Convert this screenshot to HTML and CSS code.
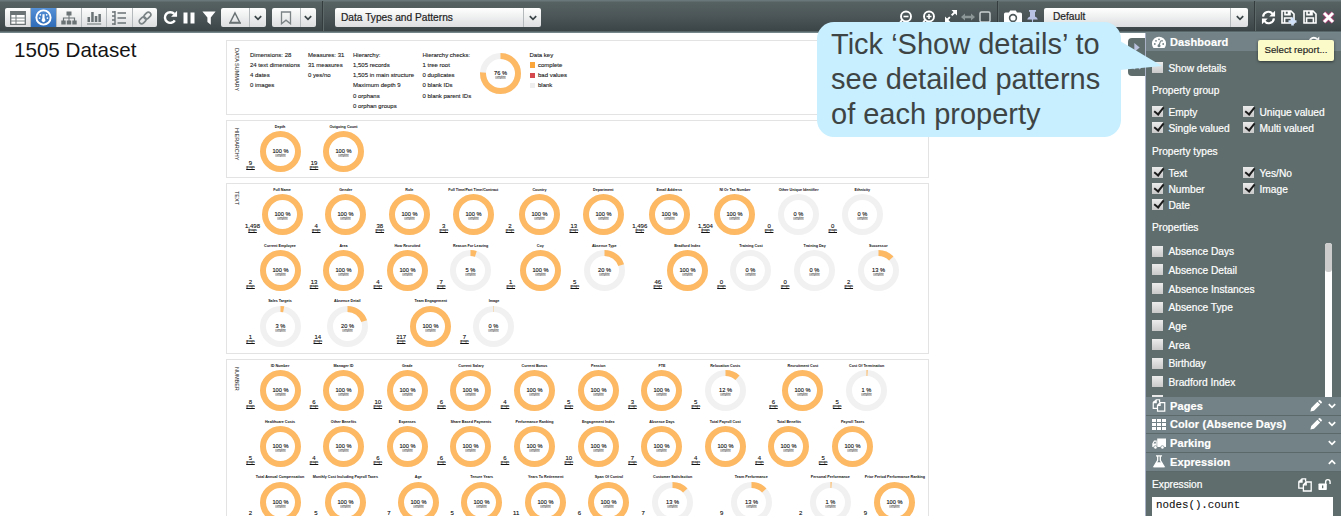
FILE: index.html
```html
<!DOCTYPE html>
<html lang="en">
<head>
<meta charset="utf-8">
<title>1505 Dataset</title>
<link rel="stylesheet" href="styles.css">
</head>
<body>
<svg class="defs" width="0" height="0">
  <symbol id="i-chev" viewBox="0 0 10 10"><path d="M1.8 3.2 5 6.4 8.2 3.2" fill="none" stroke="currentColor" stroke-width="1.7"/></symbol>
  <symbol id="i-copy" viewBox="0 0 14 14"><path d="M4 3.2H1.2L.8 4v6.2h4M.8 4 4 .8h3.6v2.6M4 .8V4H.8M8.2 4h5v9H5.4V6.8zM8.2 4v2.8H5.4" fill="none" stroke="currentColor" stroke-width="1.3"/></symbol>
  <symbol id="i-pencil" viewBox="0 0 12 12"><path d="M.4 11.6 1.2 8 7.4 1.800l2.800 2.800L4 10.800zM8.100 1.100 9 .3q.6-.5 1.200 0l1.500 1.500q.5.600 0 1.200l-.8.8z" fill="currentColor"/></symbol>
  <symbol id="i-sync" viewBox="0 0 16 16"><path d="M2.200 7A5.600 5.600 0 0 1 12.400 4.400M13.800 9A5.600 5.600 0 0 1 3.600 11.600" fill="none" stroke="currentColor" stroke-width="2.300"/><path d="M15 .8V7H8.800zM1 15.200V9h6.200z" fill="currentColor"/></symbol>
  <symbol id="i-redo" viewBox="0 0 16 16"><path d="M12.600 11A5.700 5.700 0 1 1 12 4.200" fill="none" stroke="currentColor" stroke-width="2.600"/><path d="M15 .8V7.200H8.600z" fill="currentColor"/></symbol>
  <symbol id="i-save" viewBox="0 0 14 14"><path d="M1 1h9l3 3v9H1zM4 1v3.600h5V1M3.600 13V8h6.800v5" fill="none" stroke="currentColor" stroke-width="1.600"/><path d="M6.700 1h2.300v3.500H6.700z" fill="currentColor"/></symbol>
</svg>

<header class="toolbar">
  <div class="btns views">
    <span class="btn"><svg viewBox="0 0 16 14"><path d="M.7.7h14.600v12.600H.7z" fill="#fff" stroke="#6b7375" stroke-width="1.300"/><path d="M1 1h14v3H1z" fill="#6b7375"/><path d="M1 7h14M1 10h14M6 4v9" stroke="#7b8385" stroke-width="1.100"/></svg></span>
    <span class="btn on"><svg viewBox="0 0 16 16"><circle cx="8" cy="8" r="6.700" fill="none" stroke="#fff" stroke-width="1.800"/><path d="M7 5h2v3.500l.7 1.500A1.800 1.800 0 1 1 6.300 10L7 8.500z" fill="#fff"/><g fill="#fff"><circle cx="4.300" cy="8.500" r=".8"/><circle cx="5" cy="5.500" r=".8"/><circle cx="11" cy="5.500" r=".8"/><circle cx="11.700" cy="8.500" r=".8"/></g></svg></span>
    <span class="btn"><svg viewBox="0 0 16 14"><path d="M5.500.5h5v4h-5zM.3 9.500h4.400v4H.3zM5.800 9.500h4.400v4H5.800zM11.300 9.500h4.400v4h-4.400zM7.500 4h1v6h-1z" fill="#6b7375"/><path d="M2.500 10V7h11v3" fill="none" stroke="#6b7375" stroke-width="1.200"/></svg></span>
    <span class="btn"><svg viewBox="0 0 16 14"><path d="M1.500 6h2.500v5H1.500zM5.200 1h2.500v10H5.200zM8.800 5h2.500v6H8.800zM12.400 3h2.500v8h-2.500zM1 12.600h14.200v1H1z" fill="#6b7375"/></svg></span>
    <span class="btn"><svg viewBox="0 0 16 14"><path d="M1 1h3M1 5h3M1 9h3M1 13h3M4 0v14M6.500 2H15M6.500 7H15M6.500 12H15" stroke="#6b7375" stroke-width="1.400"/></svg></span>
    <span class="btn"><svg viewBox="0 0 16 16"><g fill="none" stroke="#7b8385" stroke-width="1.900" transform="rotate(-45 8 8)"><rect x="-.2" y="5.200" width="8.800" height="5.600" rx="2.800"/><rect x="7.400" y="5.200" width="8.800" height="5.600" rx="2.800"/></g></svg></span>
  </div>
  <svg class="ic redo"><use href="#i-redo"/></svg>
  <svg class="ic pause" viewBox="0 0 12 12"><path d="M.5.500h4v11h-4zM7.500.500h4v11h-4z" fill="currentColor"/></svg>
  <svg class="ic funnel" viewBox="0 0 14 14"><path d="M.4.500h13.200L8.800 6.500v7.200L5.400 11V6.500z" fill="currentColor"/></svg>
  <div class="btns split a"><span class="btn"><svg viewBox="0 0 14 14"><path d="M7 2 11.800 11.500H2.200z" fill="none" stroke="#6b7375" stroke-width="1.500"/><path d="M1 12.200h12" stroke="#6b7375" stroke-width="1.200"/></svg></span><span class="btn drop"><svg class="chev"><use href="#i-chev"/></svg></span></div>
  <div class="btns split b"><span class="btn"><svg viewBox="0 0 14 14"><path d="M2.500 1h9v11.800L7 9.200l-4.500 3.600z" fill="none" stroke="#7b8385" stroke-width="1.300"/></svg></span><span class="btn drop"><svg class="chev"><use href="#i-chev"/></svg></span></div>
  <i class="sep s1"></i>
  <div class="select report"><span>Data Types and Patterns</span><svg class="chev"><use href="#i-chev"/></svg></div>
  <svg class="ic zo" viewBox="0 0 14 14"><circle cx="7" cy="6.500" r="5" fill="none" stroke="currentColor" stroke-width="1.900"/><path d="M4.500 6.500h5" stroke="currentColor" stroke-width="1.600"/><path d="M3 10 .8 13" stroke="currentColor" stroke-width="2"/></svg>
  <svg class="ic zi" viewBox="0 0 14 14"><circle cx="7" cy="6.500" r="5" fill="none" stroke="currentColor" stroke-width="1.900"/><path d="M4.500 6.500h5M7 4v5" stroke="currentColor" stroke-width="1.600"/><path d="M3 10 .8 13" stroke="currentColor" stroke-width="2"/></svg>
  <svg class="ic ex" viewBox="0 0 14 14"><path d="M2 12 12 2" stroke="currentColor" stroke-width="1.900" stroke-dasharray="5.500 2.500 9"/><path d="M7.500 1H13v5.500zM1 7.500V13h5.500z" fill="currentColor"/></svg>
  <svg class="ic wd" viewBox="0 0 14 10"><path d="M0 5 4 1.500v2.300h6V1.500L14 5l-4 3.500V6.200H4v2.300z" fill="#8c9697"/></svg>
  <svg class="ic sq" viewBox="0 0 12 12"><rect x="1" y="1" width="10" height="10" rx="1.500" fill="none" stroke="#c9cfd0" stroke-width="1.500"/></svg>
  <i class="sep s2"></i>
  <svg class="ic cam" viewBox="0 0 18 14"><path d="M1.500 2.500H5L6.200.5h5.600L13 2.500h3.500q1.500 0 1.500 1.500v8.500q0 1.500-1.500 1.500h-15Q0 14 0 12.500V4q0-1.500 1.500-1.500z" fill="#fff"/><circle cx="9" cy="8" r="3.400" fill="#fff" stroke="#4e5859" stroke-width="1.600"/></svg>
  <svg class="ic pin" viewBox="0 0 11 15"><path d="M2 0h7v1.500L8 2v4.500q2.500 1 2.800 3H6.200L5.500 15l-.7-5.500H.2q.3-2 2.800-3V2L2 1.500z" fill="#b8c1e2"/></svg>
  <div class="select view"><span>Default</span><svg class="chev"><use href="#i-chev"/></svg></div>
  <i class="sep s3"></i>
  <svg class="ic sync"><use href="#i-sync"/></svg>
  <svg class="ic sp" viewBox="0 0 16 16"><use href="#i-save" width="14" height="14"/><path d="M11.500 7.500v8M7.500 11.500h8" stroke="#cfe0f8" stroke-width="2.600"/></svg>
  <svg class="ic sv"><use href="#i-save"/></svg>
  <svg class="ic del" viewBox="0 0 13 13"><path d="M2 2 11 11M11 2 2 11" stroke="#a04070" stroke-width="4.800"/><path d="M2 2 11 11M11 2 2 11" stroke="#fff" stroke-width="3"/></svg>
</header>

<div class="work">
  <main class="canvas">
    <h1>1505 Dataset</h1>
    <div class="panels">
      <section class="panel summary">
        <h2>DATA SUMMARY</h2>
        <ul class="c1"><li>Dimensions: 28</li><li>24 text dimensions</li><li>4 dates</li><li>0 images</li></ul>
        <ul class="c2"><li>Measures: 31</li><li>31 measures</li><li>0 yes/no</li></ul>
        <ul class="c3"><li>Hierarchy:</li><li>1,505 records</li><li>1,505 in main structure</li><li>Maximum depth 9</li><li>0 orphans</li><li>0 orphan groups</li></ul>
        <ul class="c4"><li>Hierarchy checks:</li><li>1 tree root</li><li>0 duplicates</li><li>0 blank IDs</li><li>0 blank parent IDs</li></ul>
        <div class="total" id="total"></div>
        <ul class="key"><li>Data key</li><li><i class="k-ok"></i>complete</li><li><i class="k-bad"></i>bad values</li><li><i class="k-blank"></i>blank</li></ul>
      </section>
      <section class="panel hier"><h2>HIERARCHY</h2><div class="rows" data-set="hierarchy"></div></section>
      <section class="panel text"><h2>TEXT</h2><div class="rows" data-set="text"></div></section>
      <section class="panel num"><h2>NUMBER</h2><div class="rows" data-set="number"></div></section>
    </div>
    <div class="handles"><span><svg viewBox="0 0 8 10"><path d="M1 0 7 5 1 10z" fill="#b9c0dd"/></svg></span><span><svg viewBox="0 0 10 8"><path d="M1 7 5 2 9 7" fill="none" stroke="#b9c0dd" stroke-width="2"/></svg></span></div>
  </main>

  <aside class="side">
    <div class="bar first"><svg class="bi gauge" viewBox="0 0 14 12"><path d="M1.500 11.500A7 7 0 1 1 12.500 11.500z" fill="#fff"/><g fill="#738286"><circle cx="2.800" cy="7.500" r=".9"/><circle cx="4" cy="4.300" r=".9"/><circle cx="7" cy="2.800" r=".9"/><circle cx="10" cy="4.300" r=".9"/><circle cx="11.200" cy="7.500" r=".9"/><circle cx="7" cy="9.200" r="1.500"/><path d="M6.400 8.500 8.300 4l.8.300-1.400 4.700z"/></g></svg><b>Dashboard</b><svg class="re"><use href="#i-redo"/></svg></div>
    <div class="opts">
      <label class="one"><i class="cb"></i>Show details</label>
      <h3 class="g1">Property group</h3>
      <div class="checks"><label><i class="cb y"></i>Empty</label><label><i class="cb y"></i>Unique valued</label><label><i class="cb y"></i>Single valued</label><label><i class="cb y"></i>Multi valued</label></div>
      <h3 class="g2">Property types</h3>
      <div class="checks"><label><i class="cb y"></i>Text</label><label><i class="cb y"></i>Yes/No</label><label><i class="cb y"></i>Number</label><label><i class="cb y"></i>Image</label><label><i class="cb y"></i>Date</label></div>
      <h3 class="g3">Properties</h3>
      <div class="scroll">
        <div class="list"><label><i class="cb"></i>Absence Days</label><label><i class="cb"></i>Absence Detail</label><label><i class="cb"></i>Absence Instances</label><label><i class="cb"></i>Absence Type</label><label><i class="cb"></i>Age</label><label><i class="cb"></i>Area</label><label><i class="cb"></i>Birthday</label><label><i class="cb"></i>Bradford Index</label><label><i class="cb"></i></label></div>
        <div class="track"><div class="thumb"></div></div>
      </div>
    </div>
    <div class="bar"><svg class="bi"><use href="#i-copy"/></svg><b>Pages</b><svg class="pen"><use href="#i-pencil"/></svg><svg class="chev"><use href="#i-chev"/></svg></div>
    <div class="bar"><svg class="bi" viewBox="0 0 14 12"><path d="M0 .5h4v3H0zM5 .5h4v3H5zM10 .5h4v3h-4zM0 4.500h4v3H0zM5 4.500h4v3H5zM10 4.500h4v3h-4zM0 8.500h4v3H0zM5 8.500h4v3H5zM10 8.500h4v3h-4z" fill="#fff"/></svg><b>Color (Absence Days)</b><svg class="pen"><use href="#i-pencil"/></svg><svg class="chev"><use href="#i-chev"/></svg></div>
    <div class="bar"><svg class="bi" viewBox="0 0 14 12"><path d="M5.200 1H14v8.500H5.200zM4.700 3v6.500H.3V6L2 3z" fill="#fff"/><path d="M1.500 6 2.600 4.200h1.200V6z" fill="#738286"/><g fill="#fff" stroke="#738286" stroke-width=".7"><circle cx="3.400" cy="9.900" r="1.700"/><circle cx="10.400" cy="9.900" r="1.700"/></g></svg><b>Parking</b><svg class="chev"><use href="#i-chev"/></svg></div>
    <div class="bar"><svg class="bi" viewBox="0 0 12 12"><path d="M3.200.800h5.600M4.800 1v4L1.300 10.800h9.400L7.200 5V1" fill="none" stroke="#fff" stroke-width="1.200"/><path d="M3.800 6.800h4.400l2.600 4.400H1.200z" fill="#fff"/></svg><b>Expression</b><svg class="chev up"><use href="#i-chev"/></svg></div>
    <div class="expr">
      <div class="eh"><span>Expression</span><svg class="cp"><use href="#i-copy"/></svg><svg class="lock" viewBox="0 0 14 13"><path d="M8.200 6V3.700a2.400 2.400 0 0 1 4.800 0V6" fill="none" stroke="#fff" stroke-width="1.500"/><rect x=".5" y="5.500" width="9" height="7" rx=".8" fill="#fff"/><path d="M4.300 7.500h1.400v3H4.300z" fill="#5f6e6d"/></svg></div>
      <div class="code">nodes().count</div>
    </div>
  </aside>
</div>

<div class="callout">Tick ‘Show details’ to<br>see detailed patterns<br>of each property
  <svg class="tail" viewBox="0 0 44 32"><path d="M0 0 42 25 0 29z" fill="#c7efff"/></svg>
</div>
<div class="tip">Select report...</div>
<script src="gauges.js"></script>
</body>
</html>
```

FILE: styles.css
```css
* { box-sizing: border-box; }
body { margin: 0; width: 1341px; height: 516px; overflow: hidden; background: #fff; font-family: "Liberation Sans", Arial, sans-serif; position: relative; }
h1, h2, h3, ul { margin: 0; padding: 0; font-weight: normal; list-style: none; }
svg { display: block; flex: none; }
.defs { position: absolute; }

/* toolbar */
.toolbar { height: 33px; display: flex; align-items: flex-start; padding-top: 8px; background: linear-gradient(#69777a 0, #69777a 1px, #566162 2px, #4c5658 16px, #3b4447 31px, #75868b 32px); color: #fff; }
.btns { display: flex; height: 19px; border-radius: 2px; background: linear-gradient(#fdfdfd, #dcdedf); overflow: hidden; flex: none; }
.btn { display: flex; align-items: center; justify-content: center; border-left: 1px solid #b4b9bb; }
.btn:first-child { border-left: 0; }
.views { margin-left: 5px; width: 152px; }
.views .btn { width: 25.330px; }
.views .btn svg { width: 16px; height: 14px; }
.views .btn.on { background: linear-gradient(#5590d6, #2f6cb8); }
.views .btn.on svg { width: 17px; height: 17px; }
.split .btn:first-child { width: 28px; }
.split .btn svg { width: 14px; height: 14px; }
.split .drop { width: 16.500px; }
.split .drop svg { width: 10px; height: 10px; }
.chev { width: 10px; height: 10px; color: #3a4447; }
.a { margin-left: 5px; width: 44.500px; }
.b { margin-left: 6px; width: 44.500px; }
.ic { flex: none; }
.redo { width: 15px; height: 15px; margin: 2px 0 0 6px; }
.pause { width: 12px; height: 12px; margin: 4px 0 0 5px; }
.funnel { width: 14px; height: 14px; margin: 3px 0 0 7px; }
.sep { width: 1px; height: 30px; margin-top: -7px; background: #343c3e; box-shadow: 1px 0 #5d6869; flex: none; }
.s1 { margin-left: 6px; }
.select { display: flex; align-items: center; height: 19px; border-radius: 2px; background: linear-gradient(#fff, #dcdedf); color: #222; font-size: 10.200px; -webkit-text-stroke: .2px #222; flex: none; }
.select span { flex: 1; align-self: stretch; line-height: 19px; border-right: 1px solid #b4b9bb; }
.select .chev { margin: 0 3px 0 4px; }
.report { margin-left: 12px; width: 206px; padding-left: 6px; }
.view { margin-left: 6px; width: 204px; padding-left: 9px; }
.view span { line-height: 18px; }
.zo { width: 14px; height: 14px; margin: 2px 0 0 358px; }
.zi { width: 14px; height: 14px; margin: 2px 0 0 9px; }
.ex { width: 14px; height: 14px; margin: 1px 0 0 8px; }
.wd { width: 14px; height: 10px; margin: 4px 0 0 3px; }
.sq { width: 12px; height: 12px; margin: 3px 0 0 4px; }
.s2 { margin-left: 6px; }
.cam { width: 18px; height: 14px; margin: 2px 0 0 6px; }
.pin { width: 11px; height: 15px; margin: 2px 0 0 5px; }
.s3 { margin-left: 6px; }
.sync { width: 15px; height: 15px; margin: 2px 0 0 6px; }
.sp { width: 16px; height: 16px; margin: 2px 0 0 5px; }
.sv { width: 14px; height: 14px; margin: 2px 0 0 6px; }
.del { width: 13px; height: 13px; margin: 3px 0 0 5px; }

/* canvas */
.work { display: flex; height: 483px; }
.canvas { width: 1145px; flex: none; display: flex; position: relative; overflow: hidden; }
h1 { width: 226px; padding: 4px 0 0 14px; font-size: 20.600px; line-height: 26px; color: #151515; flex: none; }
.panels { width: 703px; padding-top: 7px; display: flex; flex-direction: column; flex: none; }
.panel { border: 1px solid #e3e3e3; display: flex; flex: none; margin-bottom: 5px; background: #fff; }
.panel h2 { width: 14px; padding-top: 7px; writing-mode: vertical-rl; font-size: 5.500px; line-height: 8px; color: #222; white-space: nowrap; flex: none; }
.panel.summary { height: 75px; }
.panel.hier { height: 58px; }
.panel.text { height: 171px; }
.panel.num { height: 190px; }
.summary ul { font-size: 6px; line-height: 10.300px; padding-top: 8.500px; color: #1c1c1c; -webkit-text-stroke: .12px #1c1c1c; white-space: nowrap; flex: none; }
.c1 { width: 58px; margin-left: 9px; }
.c2 { width: 45px; }
.c3 { width: 69.500px; }
.c4 { width: 57px; }
.total { width: 41px; padding-top: 12px; flex: none; }
.key { margin-left: 9px; }
.key i { display: inline-block; width: 5.500px; height: 5.500px; margin-right: 3px; vertical-align: -1px; }
.k-ok { background: #fba63b; }
.k-bad { background: #d3494e; }
.k-blank { background: #eee; }
.rows { display: flex; flex-direction: column; padding-top: 2.900px; }
.row { display: flex; height: 55.750px; flex: none; }
.cell { display: flex; justify-content: flex-end; flex: none; }
.groups { width: 18px; padding-top: 36px; display: flex; flex-direction: column; align-items: center; font-size: 6px; line-height: 6px; color: #111; -webkit-text-stroke: .12px #111; white-space: nowrap; flex: none; }
.groups small { font-size: 2.800px; line-height: 2px; text-decoration: underline; }
.prop { width: 41px; display: flex; flex-direction: column; align-items: center; white-space: nowrap; flex: none; }
.prop b { font-size: 3.700px; line-height: 7.500px; color: #111; }
.gauge-svg { width: 41px; height: 41px; }
.gauge-svg .pct { font-size: 5.700px; fill: #111; stroke: #111; stroke-width: .12px; }
.gauge-svg .cap { font-size: 2.600px; fill: #111; text-decoration: underline; }
.handles { position: absolute; left: 1128px; top: 5px; width: 17px; }
.handles span { display: flex; align-items: center; justify-content: center; height: 19px; background: #5f6e6d; border-radius: 4px 0 0 4px; }
.handles svg { width: 8px; height: 9px; }

/* sidebar */
.side { width: 196px; flex: none; background: #5f6e6d; border-left: 1px solid #a9b1c6; color: #fff; font-size: 10.200px; -webkit-text-stroke: .2px #fff; }
.bar { height: 18.670px; background: #738286; border-bottom: 1px solid #5b696a; display: flex; align-items: center; padding: 0 7px 0 6px; font-size: 11px; }
.bar.first { border-bottom: 0; height: 18px; }
.bar b { flex: 1; margin-left: 4px; letter-spacing: .1px; }
.bi { width: 14px; height: 13px; }
.bar .chev { color: #fff; margin-right: -3px; }
.bar .up { transform: rotate(180deg); }
.pen { width: 12px; height: 12px; margin-right: 5px; }
.re { width: 12px; height: 12px; margin-right: 14px; }
.opts { height: 346px; padding-left: 6px; overflow: hidden; }
.opts label { display: flex; align-items: center; white-space: nowrap; }
.cb { width: 11px; height: 11px; margin-right: 5.500px; background: linear-gradient(#ececec, #c9c9c9); flex: none; position: relative; top: -.5px; }
.cb.y::after { content: ""; position: absolute; left: 3.500px; top: -1px; width: 4px; height: 8px; border: solid #1b1b1b; border-width: 0 2px 2px 0; transform: rotate(38deg); }
h3 { font-size: 10.200px; line-height: 14px; }
.one { height: 16px; margin-top: 9px; }
.g1 { margin-top: 8px; }
.checks { display: grid; grid-template-columns: 91px 1fr; grid-auto-rows: 16px; }
.g1 + .checks { margin-top: 6px; }
.g2 { margin-top: 9px; }
.g2 + .checks { margin-top: 6px; }
.g3 { margin-top: 8px; }
.scroll { display: flex; justify-content: space-between; padding-right: 9px; margin-top: 7.500px; height: 162px; }
.list label { height: 18.670px; }
.track { width: 7px; background: #fff; border-radius: 3px; height: 162px; }
.thumb { height: 29px; background: #ccc; border-radius: 3px; }
.expr { padding: 4px 7px 0 6px; }
.eh { display: flex; align-items: center; height: 18px; }
.eh span { flex: 1; }
.cp { width: 14px; height: 14px; margin-right: 6px; }
.lock { width: 13px; height: 13px; margin-right: 3px; }
.code { margin-top: 3px; height: 30px; width: 181px; background: #fff; color: #111; -webkit-text-stroke: .1px #111; font: 10.800px/16px "Liberation Mono", monospace; padding-left: 4px; }

/* overlays */
.callout { position: absolute; left: 817px; top: 22px; width: 304px; height: 115px; border-radius: 17px; background: #c7efff; color: #3e4444; font-size: 29px; line-height: 35.200px; padding: 5px 0 0 14px; white-space: nowrap; }
.tail { position: absolute; left: 303px; top: 19px; width: 44px; height: 32px; }
.tip { position: absolute; left: 1258px; top: 40px; width: 76px; height: 21px; border-radius: 2px; background: #fbfac9; color: #222; font-size: 9.700px; line-height: 20px; text-align: center; box-shadow: 0 1px 3px rgba(0,0,0,.5); -webkit-text-stroke: .15px #222; }
```

FILE: gauges.js
```js
// Each entry: [name, groups, percent complete, centre offset in the panel]
const sets = {
  hierarchy: [[['Depth', '9', 100, 39], ['Outgoing Count', '19', 100, 102.5]]],
  text: [
    [['Full Name', '1,498', 100, 41], ['Gender', '4', 100, 104.7], ['Role', '38', 100, 168.3], ['Full Time/Part Time/Contract', '3', 100, 232.3], ['Country', '2', 100, 298.5], ['Department', '13', 100, 362.3], ['Email Address', '1,496', 100, 428.3], ['NI Or Tax Number', '1,504', 100, 494], ['Other Unique Identifier', '0', 0, 557.7], ['Ethnicity', '0', 0, 621.3]],
    [['Current Employee', '2', 100, 39], ['Area', '13', 100, 102.5], ['How Recruited', '4', 100, 166.3], ['Reason For Leaving', '7', 5, 229.7], ['Coy', '1', 100, 299.3], ['Absence Type', '5', 20, 363.3], ['Bradford Index', '46', 100, 446.3], ['Training Cost', '0', 0, 510], ['Training Day', '0', 0, 573.7], ['Successor', '2', 13, 637.3]],
    [['Sales Targets', '1', 3, 39], ['Absence Detail', '14', 20, 106.3], ['Team Engagement', '217', 100, 189.7], ['Image', '7', 0.4, 253]]
  ],
  number: [
    [['ID Number', '8', 100, 39], ['Manager ID', '6', 100, 102.5], ['Grade', '10', 100, 166.3], ['Current Salary', '6', 100, 230], ['Current Bonus', '4', 100, 293.5], ['Pension', '5', 100, 357.3], ['FTE', '3', 100, 421], ['Relocation Costs', '5', 12, 484.3], ['Recruitment Cost', '6', 100, 562], ['Cost Of Termination', '5', 1, 625.7]],
    [['Healthcare Costs', '5', 100, 39], ['Other Benefits', '4', 100, 102.5], ['Expenses', '6', 100, 166.3], ['Share Based Payments', '6', 100, 230], ['Performance Ranking', '6', 100, 293.5], ['Engagement Index', '10', 100, 357.3], ['Absence Days', '7', 100, 421], ['Total Payroll Cost', '4', 100, 484.3], ['Total Benefits', '4', 100, 548], ['Payroll Taxes', '5', 100, 611.7]],
    [['Total Annual Compensation', '2', 100, 39], ['Monthly Cost Including Payroll Taxes', '5', 100, 104.3], ['Age', '7', 100, 177.3], ['Tenure Years', '5', 100, 240.7], ['Years To Retirement', '11', 100, 304.7], ['Span Of Control', '6', 100, 368], ['Customer Satisfaction', '7', 13, 431.7], ['Team Performance', '9', 13, 510.3], ['Personal Performance', '2', 1, 589.3], ['Prior Period Performance Ranking', '9', 100, 654]]
  ]
};

function gauge(p) {
  const arc = p > 0 ? `<circle cx="20.5" cy="20.5" r="17.500" fill="none" stroke="#fdb964" stroke-width="6" pathLength="100" stroke-dasharray="${p} ${100 - p + 0.001}" transform="rotate(-90 20.5 20.5)"/>` : '';
  return `<svg class="gauge-svg" viewBox="0 0 41 41"><circle cx="20.5" cy="20.5" r="17.500" fill="none" stroke="#f1f1f1" stroke-width="${p === 100 ? 5 : 6}"/>${arc}
    <text class="pct" x="20.5" y="22.2" text-anchor="middle">${Math.floor(p)} %</text><text class="cap" x="20.5" y="24.600" text-anchor="middle">complete</text></svg>`;
}

document.getElementById('total').innerHTML = gauge(76);
for (const box of document.querySelectorAll('[data-set]')) {
  box.innerHTML = sets[box.dataset.set].map(row => {
    let edge = 0;
    return '<div class="row">' + row.map(([name, n, p, x]) => {
      const w = x + 20.5 - edge;
      edge += w;
      return `<div class="cell" style="width:${w.toFixed(2)}px"><div class="groups">${n}<small>groups</small></div><div class="prop"><b>${name}</b>${gauge(p)}</div></div>`;
    }).join('') + '</div>';
  }).join('');
}
```
